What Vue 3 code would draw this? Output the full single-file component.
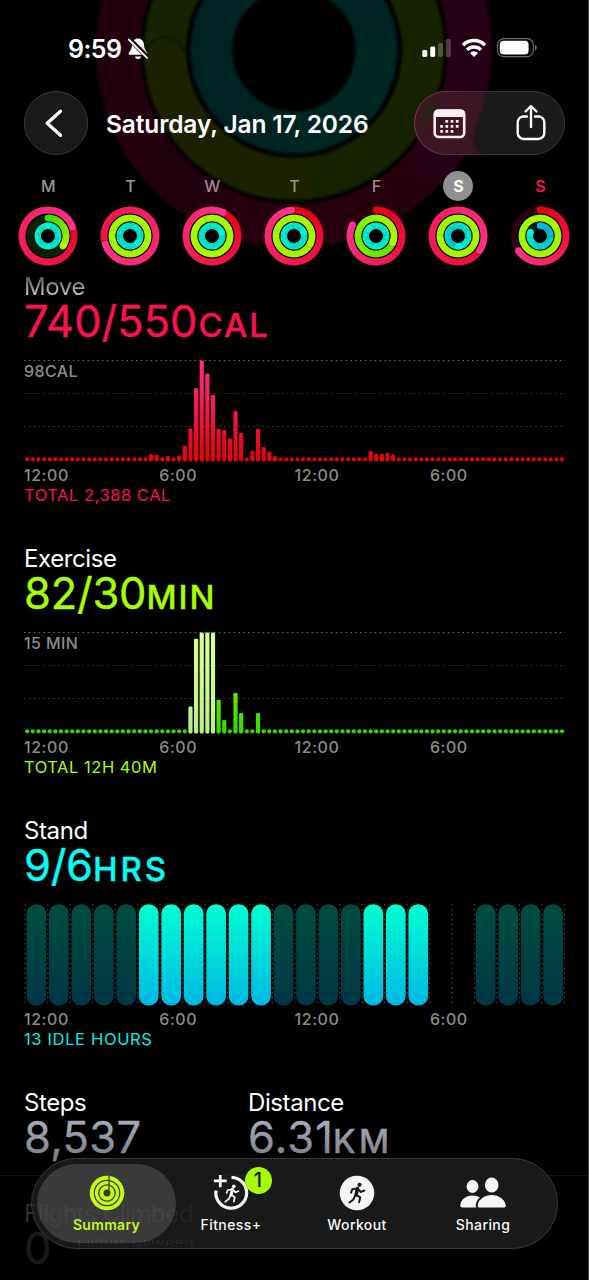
<script setup>
const mix = (a, b, t) =>
  `rgb(${a.map((v, i) => Math.round(v + (b[i] - v) * t)).join(',')})`

const specs = [
  { r: 26.0, w: 6.8, from: [227, 0, 16], to: [255, 50, 140], track: '#2a0207', shadow: 0.22 },
  { r: 18.0, w: 6.6, from: [60, 222, 0], to: [176, 255, 0], track: '#082100', shadow: 0.14 },
  { r: 10.2, w: 6.4, from: [0, 184, 230], to: [0, 250, 212], track: '#031c26', shadow: 0.08 },
]

const point = (r, turn) => {
  const a = turn * Math.PI * 2
  return [+(30 + r * Math.sin(a)).toFixed(2), +(30 - r * Math.cos(a)).toFixed(2)]
}

function buildRing(spec, p) {
  const start = Math.max(0, p - 1)
  const n = 72
  const step = (p - start) / n
  const segs = []
  const tone = (t) => (p >= 1.9 ? 0.75 + t * 0.2 : t)
  for (let i = 0; i < n; i++) {
    const a = start + i * step
    const [x1, y1] = point(spec.r, a - (i ? 0.004 : 0))
    const [x2, y2] = point(spec.r, a + step)
    segs.push({
      d: `M${x1} ${y1}A${spec.r} ${spec.r} 0 0 1 ${x2} ${y2}`,
      c: mix(spec.from, spec.to, tone((a + step) / p)),
    })
  }
  return {
    ...spec,
    segs,
    over: p > 0.97,
    startPt: p < 1 ? point(spec.r, 0) : null,
    endPt: point(spec.r, p),
    shade: point(spec.r, p + 0.4 / spec.r / 3),
    startColor: mix(spec.from, spec.to, 0),
    endColor: mix(spec.from, spec.to, tone(1)),
  }
}

const days = [
  { l: 'M', p: [1.195, 0.345, 2.0] },
  { l: 'T', p: [1.7, 2.35, 2.37] },
  { l: 'W', p: [1.07, 2.91, 2.2] },
  { l: 'T', p: [0.985, 2.32, 2.2] },
  { l: 'F', p: [0.82, 1.31, 2.88] },
  { l: 'S', p: [1.345, 2.73, 1.5], selected: true },
  { l: 'S', p: [0.655, 2.16, 0.81], today: true },
].map((d) => ({ ...d, rings: d.p.map((p, i) => buildRing(specs[i], p)) }))

const moveBars = {
  22: 7.3, 23: 6.7, 25: 5.3, 27: 6, 28: 15.7, 29: 33, 30: 73.3, 31: 101, 32: 88, 33: 66.7,
  34: 32.7, 35: 31.3, 36: 23, 37: 50.3, 38: 28.3, 40: 10.3, 41: 32.3, 42: 14.3, 43: 9.7, 44: 5.3,
  61: 10.3, 62: 7.7, 63: 7.7, 64: 8.3, 65: 7,
}
const exerciseBars = {
  29: 27, 30: 94.7, 31: 101, 32: 101, 33: 101, 34: 33.7, 35: 13.3, 37: 40.3, 38: 20.3, 41: 20.3,
}
const toBars = (src, pale) =>
  Array.from({ length: 96 }, (_, i) => {
    const h = src[i] || 4.2
    return {
      x: +(1.1 + i * 5.63).toFixed(2),
      y: 101.4 - h,
      h,
      rx: src[i] ? 1.3 : 2.1,
      pale: pale.includes(i),
    }
  })

const charts = [
  {
    id: 'move', title: 'Move', value: '740/550', vw: 173.5, unit: 'CAL', ux: 174.5, uw: 69.5,
    max: '98CAL', total: 'TOTAL 2,388 CAL', bars: toBars(moveBars, []),
  },
  {
    id: 'exercise', title: 'Exercise', value: '82/30', vw: 122.5, unit: 'MIN', ux: 122.5, uw: 68,
    max: '15 MIN', total: 'TOTAL 12H 40M', bars: toBars(exerciseBars, [29, 30, 31, 32, 33]),
  },
]

const standActive = [5, 6, 7, 8, 9, 10, 15, 16, 17]
const hours = Array.from({ length: 24 }, (_, i) => i)
  .filter((i) => i !== 18 && i !== 19)
  .map((i) => ({ x: 2.6 + i * 22.46, on: standActive.includes(i) }))
const times = ['12:00', '6:00', '12:00', '6:00']
</script>

<template>
  <div class="screen">
    <svg class="backdrop" width="589" height="260" viewBox="0 0 589 260">
      <defs>
        <filter id="soft"><feGaussianBlur stdDeviation="1.8" /></filter>
        <linearGradient id="bgRed" x1="0" y1="0" x2="1" y2="0">
          <stop offset="0" stop-color="#23040e" />
          <stop offset=".55" stop-color="#25030b" />
          <stop offset="1" stop-color="#260513" />
        </linearGradient>
      </defs>
      <g fill="none" filter="url(#soft)">
        <circle cx="294" cy="50" r="176" stroke="url(#bgRed)" stroke-width="44" />
        <circle cx="294" cy="50" r="129" stroke="#182300" stroke-width="42" />
        <circle cx="294" cy="50" r="82.500" stroke="#002220" stroke-width="42" />
        <path d="M165 63A129 129 0 0 0 294 179" stroke="#1c2100" stroke-width="41" stroke-linecap="round" />
        <path d="M145 53A20.500 20.500 0 0 1 185 54" stroke="#0f1600" stroke-width="3" />
        <path d="M292 132A82 82 0 0 0 376 50" stroke="#002620" stroke-width="40" stroke-linecap="round" />
        <path d="M470 55Q468 115 437 157" stroke="#270616" stroke-width="43" stroke-linecap="round" />
      </g>
    </svg>

    <div class="status">
      <span class="clock">9:59</span>
      <svg class="bell" width="22" height="24" viewBox="0 0 22 24">
        <path d="M11 1.500C7.600 1.500 5.300 4 5.100 7.300C4.900 11.500 3.500 13.500 2 15.400C1.100 16.600 1.700 17.800 3 17.800H19C20.300 17.800 20.900 16.600 20 15.400C18.500 13.500 17.100 11.500 16.900 7.300C16.700 4 14.400 1.500 11 1.500Z" fill="#fff" />
        <path d="M8 19.500H14C13.800 21.200 12.600 22 11 22S8.200 21.200 8 19.500Z" fill="#fff" />
        <path d="M1.800 1.500L20.500 20" stroke="#1a060c" stroke-width="4.600" />
        <path d="M1.800 2.500L20 20.800" stroke="#fff" stroke-width="1.800" stroke-linecap="round" />
      </svg>
      <svg class="signals" width="118" height="24" viewBox="0 0 118 24">
        <rect x="0.300" y="13" width="5" height="7" rx="1.400" fill="#fff" />
        <rect x="8.200" y="9.600" width="5" height="10.400" rx="1.400" fill="#fff" />
        <rect x="16" y="6" width="5" height="14" rx="1.400" fill="#fff" opacity=".24" />
        <rect x="23.800" y="2" width="5" height="18" rx="1.400" fill="#fff" opacity=".24" />
        <g fill="none" stroke="#fff" stroke-width="3.500">
          <path d="M41 8.200A15.500 15.500 0 0 1 63 8.200" />
          <path d="M45 12.800A10 10 0 0 1 59 12.800" />
        </g>
        <path d="M52 20L47.900 15.900A6 6 0 0 1 56.100 15.900Z" fill="#fff" />
        <rect x="75.700" y="1.700" width="35.600" height="18" rx="6" fill="none" stroke="#fff" stroke-opacity=".42" stroke-width="1.200" />
        <rect x="77.800" y="3.800" width="28.800" height="13.800" rx="4" fill="#fff" />
        <path d="M113 7.800V13.600C115.300 12.500 115.300 8.900 113 7.800Z" fill="#fff" opacity=".45" />
      </svg>
    </div>

    <header class="header">
      <div class="back">
        <svg width="64" height="64" viewBox="0 0 64 64">
          <path d="M36.500 20.300L23.200 32.300L36.500 44.300" fill="none" stroke="#fff" stroke-width="3.300" stroke-linecap="round" stroke-linejoin="round" />
        </svg>
      </div>
      <h1>Saturday, Jan 17, 2026</h1>
      <div class="actions">
        <svg width="151" height="64" viewBox="0 0 151 64">
          <defs>
            <filter id="haze" x="-20%" width="140%"><feGaussianBlur stdDeviation="2" /></filter>
            <clipPath id="capsule"><rect width="151" height="64" rx="32" /></clipPath>
            <linearGradient id="rim" x1="0" y1="0" x2="1" y2="0">
              <stop offset="0" stop-color="#8b3152" />
              <stop offset=".38" stop-color="#5a2539" />
              <stop offset=".5" stop-color="#343434" />
            </linearGradient>
          </defs>
          <g clip-path="url(#capsule)">
            <rect width="151" height="64" fill="#1b1b1b" />
            <path d="M-8 -8H72C72 20 58 38 59 50C60 58 68 62 66 72H-8Z" fill="#3e1727" filter="url(#haze)" />
            <ellipse cx="14" cy="23" rx="6" ry="15" fill="#2b2012" transform="rotate(25 14 23)" filter="url(#haze)" />
          </g>
          <rect x=".5" y=".5" width="150" height="63" rx="31.500" fill="none" stroke="url(#rim)" />
          <rect x="20.700" y="19.500" width="29.500" height="26.500" rx="4" fill="none" stroke="#ffedf5" stroke-width="2.600" />
          <path d="M20 26V22A4 4 0 0 1 24 18.500H47A4 4 0 0 1 51 22V26Z" fill="#ffedf5" />
          <g fill="#ffedf5">
            <rect v-for="i in 3" :key="'a' + i" :x="26.200 + i * 5.200" y="29" width="2.800" height="2.800" rx=".5" />
            <rect v-for="i in 4" :key="'b' + i" :x="21 + i * 5.200" y="34" width="2.800" height="2.800" rx=".5" />
            <rect v-for="i in 3" :key="'c' + i" :x="21 + i * 5.200" y="39" width="2.800" height="2.800" rx=".5" />
          </g>
          <path d="M113 25.500H109.500A6 6 0 0 0 103.700 31V42A6 6 0 0 0 109.500 48H124.500A6 6 0 0 0 130.300 42V31A6 6 0 0 0 124.500 25.500H121M117 36V15.500M111.500 20.500L117 15L122.500 20.500" fill="none" stroke="#fff" stroke-width="2.400" stroke-linecap="round" stroke-linejoin="round" />
        </svg>
      </div>
    </header>

    <div class="week">
      <div v-for="(d, i) in days" :key="i" class="day">
        <span class="letter" :class="{ selected: d.selected, today: d.today, warm: i === 2 || i === 4, olive: i === 3 }">{{ d.l }}</span>
        <svg width="60" height="60" viewBox="0 0 60 60">
          <circle cx="30" cy="30" r="29.500" fill="#000" fill-opacity=".7" />
          <g v-for="(g, k) in d.rings" :key="k" fill="none">
            <circle cx="30" cy="30" :r="g.r" :stroke="g.track" :stroke-width="g.w" />
            <circle v-if="g.startPt" :cx="g.startPt[0]" :cy="g.startPt[1]" :r="g.w / 2" :fill="g.startColor" />
            <path v-for="(s, j) in g.segs" :key="j" :d="s.d" :stroke="s.c" :stroke-width="g.w" />
            <circle v-if="g.over" :cx="g.shade[0]" :cy="g.shade[1]" :r="g.w / 2" fill="#000" :fill-opacity="g.shadow" />
            <circle :cx="g.endPt[0]" :cy="g.endPt[1]" :r="g.w / 2" :fill="g.endColor" />
          </g>
        </svg>
      </div>
    </div>

    <svg class="defs" width="0" height="0">
      <defs>
        <linearGradient id="g-move" gradientUnits="userSpaceOnUse" x1="0" y1="101" x2="0" y2="0">
          <stop offset="0" stop-color="#e20008" /><stop offset="1" stop-color="#ff2f8b" />
        </linearGradient>
        <linearGradient id="g-exercise" gradientUnits="userSpaceOnUse" x1="0" y1="101" x2="0" y2="0">
          <stop offset="0" stop-color="#33d900" /><stop offset="1" stop-color="#a8ff00" />
        </linearGradient>
        <linearGradient id="g-pale" gradientUnits="userSpaceOnUse" x1="0" y1="101" x2="0" y2="0">
          <stop offset="0" stop-color="#b4ee88" /><stop offset=".3" stop-color="#c4f78c" /><stop offset="1" stop-color="#dcff96" />
        </linearGradient>
        <linearGradient id="g-on" x1="0" y1="0" x2="0" y2="1">
          <stop offset="0" stop-color="#00ffd2" /><stop offset="1" stop-color="#00b8e4" />
        </linearGradient>
        <linearGradient id="g-off" x1="0" y1="0" x2="0" y2="1">
          <stop offset="0" stop-color="#004d3f" /><stop offset="1" stop-color="#003746" />
        </linearGradient>
        <linearGradient id="g-grey" gradientUnits="userSpaceOnUse" x1="0" y1="8" x2="0" y2="42">
          <stop offset="0" stop-color="#a5a9b4" /><stop offset="1" stop-color="#7e818b" />
        </linearGradient>
      </defs>
    </svg>

    <main>
      <section v-for="c in charts" :key="c.id" :class="c.id">
        <h2>{{ c.title }}</h2>
        <svg class="value" width="300" height="46" viewBox="0 0 300 46">
          <text x="0" y="38" :textLength="c.vw" class="num">{{ c.value }}</text>
          <text :x="c.ux" y="38" :textLength="c.uw" class="unit">{{ c.unit }}</text>
        </svg>
        <div class="chart">
          <svg width="542" height="102" viewBox="0 0 542 102">
            <g stroke-width="1" stroke-dasharray="1.700 3.170">
              <path d="M0 .5H541" stroke="#656565" />
              <path d="M0 33.500H541M0 66.500H541" stroke="#3c3c3c" />
            </g>
            <rect v-for="(b, i) in c.bars" :key="i" :x="b.x" :y="b.y" width="4.200" :height="b.h" :rx="b.rx" :fill="b.pale ? 'url(#g-pale)' : `url(#g-${c.id})`" />
          </svg>
          <span class="max">{{ c.max }}</span>
        </div>
        <div class="axis"><span v-for="(t, i) in times" :key="i">{{ t }}</span></div>
        <p class="total">{{ c.total }}</p>
      </section>

      <section class="stand">
        <h2>Stand</h2>
        <svg class="value" width="300" height="46" viewBox="0 0 300 46">
          <text x="0" y="38" textLength="69" class="num">9/6</text>
          <text x="69" y="38" textLength="73" class="unit">HRS</text>
        </svg>
        <div class="chart">
          <svg width="542" height="102" viewBox="0 0 542 102">
            <path v-for="i in 25" :key="i" :d="`M${1.3 + (i - 1) * 22.46} .3V101`" stroke="#4a4a4a" stroke-width="1.300" stroke-dasharray="1.300 3.570" />
            <rect v-for="(h, i) in hours" :key="i" :x="h.x" y=".2" width="19.700" height="101.300" rx="9.500" :fill="h.on ? 'url(#g-on)' : 'url(#g-off)'" />
          </svg>
        </div>
        <div class="axis"><span v-for="(t, i) in times" :key="i">{{ t }}</span></div>
        <p class="total">13 IDLE HOURS</p>
      </section>

      <section class="metrics">
        <div class="metric">
          <h2>Steps</h2>
          <svg class="value" width="200" height="50" viewBox="0 0 200 50">
            <text x="0" y="38" textLength="117" class="num">8,537</text>
          </svg>
        </div>
        <div class="metric">
          <h2>Distance</h2>
          <svg class="value" width="200" height="50" viewBox="0 0 200 50">
            <text x="0" y="38" textLength="85" class="num">6.31</text>
            <text x="85" y="38" textLength="56" class="unit">KM</text>
          </svg>
        </div>
      </section>
      <section class="flights">
        <h2>Flights Climbed</h2>
        <svg class="value" width="100" height="46" viewBox="0 0 100 46">
          <text x="0" y="38" class="num">0</text>
        </svg>
      </section>
    </main>

    <nav class="tabs">
      <span class="reflection">Flights Climbed</span>
      <div class="tab active">
        <svg width="36" height="36" viewBox="0 0 36 36">
          <circle cx="18" cy="18" r="17.300" fill="#c4fb1c" />
          <g fill="none" stroke="#3f461f" stroke-width="1.300">
            <circle cx="18" cy="18" r="12.700" />
            <circle cx="18" cy="18" r="8.200" />
          </g>
          <circle cx="18" cy="18" r="3.500" fill="#39391f" />
          <path d="M20 .8V15.500" stroke="#39391f" stroke-width="1.300" />
        </svg>
        <span>Summary</span>
      </div>
      <div class="tab">
        <svg width="36" height="36" viewBox="0 0 36 36">
          <path d="M18.500 2.400A15.400 15.400 0 1 1 3 15.500" fill="none" stroke="#f5f5f5" stroke-width="3.300" />
          <path d="M7.300 -.5V12.300M.9 5.900H13.700" stroke="#f5f5f5" stroke-width="2.700" />
          <g class="runner light" transform="translate(18.500 18.500) scale(.92)">
            <circle cx="2.500" cy="-7.800" r="2" />
            <path d="M1 -4.600L-.4 1.600" class="torso" />
            <path d="M.8 -4.600L-4 -3.800L-5.300 -.6M1.800 -3.900L4 -1.300L7.600 -2.600M0 1.600L3.600 4L2.500 8.800M-1 1.800L-3 6L-6.800 9" />
          </g>
        </svg>
        <span>Fitness+</span>
        <b class="badge">1</b>
      </div>
      <div class="tab">
        <svg width="36" height="36" viewBox="0 0 36 36">
          <circle cx="18" cy="18" r="17.300" fill="#f5f5f5" />
          <g class="runner dark" transform="translate(17.500 18.300) scale(1.030)">
            <circle cx="2.900" cy="-8.200" r="2" />
            <path d="M1 -4.600L-.4 1.600" class="torso" />
            <path d="M.8 -4.800L-4 -4L-5.300 -.6M1.800 -3.900L4 -1.300L7.600 -2.600M0 1.600L3.600 4L2.500 8.800M-1 1.800L-3 6L-6.800 9" />
          </g>
        </svg>
        <span>Workout</span>
      </div>
      <div class="tab">
        <svg width="48" height="36" viewBox="0 0 48 36">
          <g fill="#f5f5f5">
            <ellipse cx="13.500" cy="11.500" rx="5.900" ry="6.400" />
            <path d="M3.500 32.500C1.900 32.500 1.300 31.700 1.300 30.300C1.700 24.800 6.800 20.500 13.500 20.500C16.500 20.500 19 21.200 21 22.600C18.300 24.500 17 27.500 16.800 30C16.700 31 16.900 32 17.500 32.500Z" />
            <ellipse cx="32.700" cy="10" rx="6.800" ry="7.500" />
            <path d="M21 32.500C19.300 32.500 18.500 31.600 18.700 30.200C19.500 24.300 25.500 20 32.700 20S45.900 24.300 46.700 30.200C46.900 31.600 46.100 32.500 44.400 32.500Z" />
          </g>
        </svg>
        <span>Sharing</span>
      </div>
    </nav>
  </div>
</template>

<style>
html, body { background: #000; }
</style>

<style scoped>
.screen {
  position: relative;
  box-sizing: border-box;
  width: 589px;
  height: 1280px;
  overflow: hidden;
  background: #000;
  border-right: 1px solid #3a3a3a;
  color: #fff;
  font-family: Inter, "Liberation Sans", sans-serif;
}
.screen svg { display: block; flex: none; }
.backdrop, .defs { position: absolute; left: 0; top: 0; }
.status {
  position: relative;
  display: flex;
  align-items: center;
  height: 91px;
  padding: 7px 48px 0 68px;
  box-sizing: border-box;
}
.clock { font-size: 25px; font-weight: 600; letter-spacing: -0.6px; }
.bell { margin-left: 6px; margin-top: -1px; }
.signals { margin-left: auto; }
.header {
  position: relative;
  display: flex;
  align-items: center;
  height: 64px;
  padding: 0 23px 0 24px;
}
.back {
  box-sizing: border-box;
  width: 64px;
  height: 64px;
  border: 1px solid #3a3a3a;
  border-radius: 32px;
  background: #191919;
}
.back svg { margin: -1px; }
h1 {
  margin: 1px 0 0 18px;
  font-size: 24.5px;
  font-weight: 600;
  letter-spacing: -0.13px;
  white-space: nowrap;
}
.actions { margin-left: auto; }
.week {
  position: relative;
  display: flex;
  padding: 16px 0 0 7.4px;
}
.day { flex: none; width: 82px; display: flex; flex-direction: column; align-items: center; }
.letter {
  width: 30px;
  height: 30px;
  border-radius: 50%;
  margin-bottom: 5px;
  text-align: center;
  font-size: 16px;
  line-height: 30px;
  font-weight: 500;
  color: #98989a;
}
.letter.warm { color: #a48690; }
.letter.olive { color: #959b76; }
.letter.selected { background: #909090; color: #fff; font-weight: 700; }
.letter.today { color: #f8114f; font-weight: 600; }
main { padding-left: 24px; margin-top: 4px; }
main section { height: 272.1px; }
h2 {
  margin: 0;
  padding-top: 1.5px;
  font-size: 24px;
  font-weight: 400;
  line-height: 30px;
  letter-spacing: -0.4px;
  white-space: nowrap;
}
.move h2 {
  width: max-content;
  background: linear-gradient(#555 20%, #ddd 90%);
  -webkit-background-clip: text;
  background-clip: text;
  color: transparent;
}
.value { overflow: visible; margin-top: -2.5px; }
.num { font-size: 43.5px; font-weight: 400; }
.unit { font-size: 33px; font-weight: 500; }
.value text { stroke-width: 0.35; stroke-linejoin: round; }
.move .value text { fill: #fa1150; stroke: #fa1150; }
.exercise .value text { fill: #a6ff00; stroke: #a6ff00; }
.stand .value text { fill: #00fff6; stroke: #00fff6; }
.metrics .value text { fill: url(#g-grey); stroke: url(#g-grey); }
.flights .value text { fill: #191a1c; stroke: #191a1c; }
.chart { position: relative; margin-top: 15px; }
.max {
  position: absolute;
  left: 0;
  top: 1px;
  font-size: 16px;
  line-height: 20px;
  font-weight: 500;
  letter-spacing: 0.4px;
  color: #8b8b8f;
}
.axis {
  display: grid;
  grid-template-columns: repeat(4, 135.3px);
  margin-top: 3px;
  font-size: 16px;
  line-height: 20px;
  font-weight: 500;
  letter-spacing: 0.55px;
  color: #8b8b8f;
}
.total { margin: 0; font-size: 16.5px; line-height: 20px; letter-spacing: 0.53px; }
.move .total { color: #fa1150; }
.exercise .total { color: #a6ff00; }
.stand .total { color: #00f0e4; letter-spacing: 0.65px; }
main .metrics {
  display: grid;
  grid-template-columns: 224px 1fr;
  height: 89px;
}
main .flights {
  height: auto;
  margin-left: -24px;
  padding: 21px 0 0 24px;
  border-top: 1px solid #141414;
}
.flights h2 { color: #303030; }
.tabs {
  position: absolute;
  left: 31px;
  top: 1158px;
  box-sizing: border-box;
  width: 527px;
  height: 91px;
  display: flex;
  padding: 5px;
  border: 1px solid #383838;
  border-radius: 46px;
  background: rgba(33, 33, 33, 0.76);
  overflow: hidden;
}
.reflection {
  position: absolute;
  left: 0;
  bottom: -10px;
  padding-left: 45px;
  font-size: 16px;
  line-height: 30px;
  transform: scaleY(-0.45);
  color: #2b2b2b;
}
.tab {
  position: relative;
  display: flex;
  flex-direction: column;
  align-items: center;
  width: 126px;
  height: 79px;
  padding-top: 11px;
  box-sizing: border-box;
  color: #f5f5f5;
}
.tab.active {
  width: 139px;
  margin-right: -8px;
  border-radius: 40px;
  background: rgba(255, 255, 255, 0.145);
  color: #c4fb1c;
}
.tab span { font-size: 14px; line-height: 20px; margin-top: 3.5px; font-weight: 500; letter-spacing: 0.4px; }
.tab.active span { font-weight: 600; letter-spacing: 0.3px; }
.badge {
  position: absolute;
  left: 76.5px;
  top: 2.5px;
  width: 27px;
  height: 27px;
  border-radius: 50%;
  background: #a6ff00;
  color: #0d1400;
  font-size: 20px;
  font-weight: 500;
  line-height: 27px;
  text-align: center;
}
.runner path { fill: none; stroke-width: 1.9; stroke-linecap: round; stroke-linejoin: round; }
.runner .torso { stroke-width: 3.4; }
.light path { stroke: #f5f5f5; }
.light circle { fill: #f5f5f5; }
.dark path { stroke: #151515; }
.dark circle { fill: #151515; }
</style>
